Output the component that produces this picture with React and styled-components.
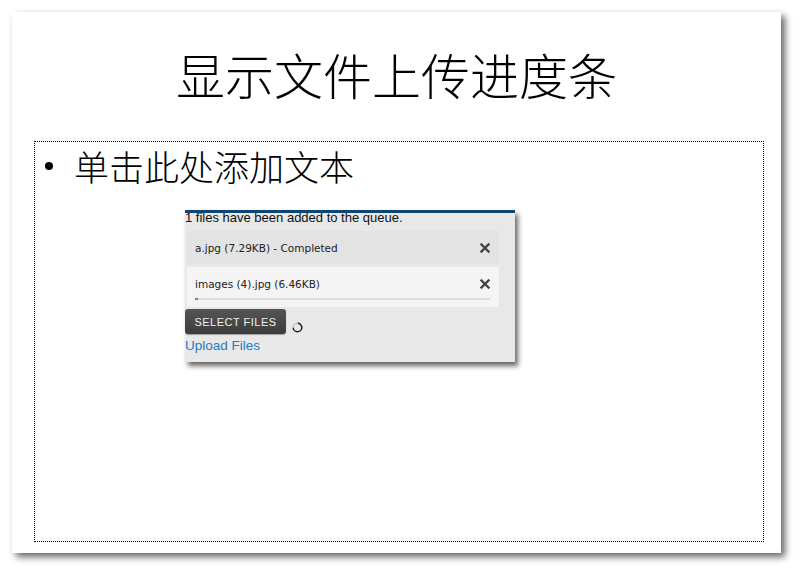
import React from 'react';
import styled, { createGlobalStyle } from 'styled-components';

const Global = createGlobalStyle`
    html, body {
        margin: 0;
        padding: 0;
        background: #ffffff;
    }
    * {
        box-sizing: border-box;
    }
`;

const files = [
    { name: 'a.jpg (7.29KB) - Completed', done: true },
    { name: 'images (4).jpg (6.46KB)', done: false, progress: 1 },
];

const CloseIcon = () => (
    <svg width="10" height="10" viewBox="0 0 10 10">
        <path d="M1.5 1.5 L8.5 8.5 M8.5 1.5 L1.5 8.5" stroke="#444" strokeWidth="2.4" strokeLinecap="square" />
    </svg>
);

const Spinner = () => (
    <svg width="11" height="11" viewBox="0 0 11 11">
        <path d="M5.5 1.2 A4.3 4.3 0 1 1 1.2 5.5" fill="none" stroke="#222" strokeWidth="1.5" />
        <path d="M1.2 5.5 A4.3 4.3 0 0 1 5.5 1.2" fill="none" stroke="#c8c8c8" strokeWidth="1.5" />
    </svg>
);

export default function App() {
    return (
        <>
            <Global />
            <Page>
                <Slide>
                    <Title>显示文件上传进度条</Title>
                    <ContentBox>
                        <Bullet>
                            <Dot />
                            <BulletText>单击此处添加文本</BulletText>
                        </Bullet>
                        <Shot>
                            <QueueText>1 files have been added to the queue.</QueueText>
                            <FileList>
                                {files.map(f => (
                                    <FileRow key={f.name} done={f.done}>
                                        <FileLine>
                                            <FileName>{f.name}</FileName>
                                            <CloseIcon />
                                        </FileLine>
                                        {!f.done && (
                                            <Track>
                                                <Fill style={{ width: `${f.progress}%` }} />
                                            </Track>
                                        )}
                                    </FileRow>
                                ))}
                            </FileList>
                            <ButtonRow>
                                <SelectButton>SELECT FILES</SelectButton>
                                <SpinWrap>
                                    <Spinner />
                                </SpinWrap>
                            </ButtonRow>
                            <UploadLink href="#">Upload Files</UploadLink>
                        </Shot>
                    </ContentBox>
                </Slide>
            </Page>
        </>
    );
}

const Page = styled.div`
    width: 801px;
    height: 573px;
    padding: 12px 0 0 12px;
    background: #ffffff;
`;

const Slide = styled.div`
    width: 769px;
    height: 541px;
    background: #ffffff;
    box-shadow: 4px 4px 7px rgba(0, 0, 0, 0.6);
    padding: 37px 0 0 22px;
    display: flex;
    flex-direction: column;
`;

const Title = styled.h1`
    margin: 0 22px 0 0;
    font-family: 'Noto Sans CJK SC', sans-serif;
    font-weight: 300;
    font-size: 49px;
    line-height: 49px;
    color: #000;
    text-align: center;
`;

const ContentBox = styled.div`
    margin-top: 43px;
    width: 730px;
    height: 401px;
    border: 1px dotted #000;
    padding: 6px 0 0 10px;
`;

const Bullet = styled.div`
    display: flex;
    align-items: center;
    height: 35px;
`;

const Dot = styled.span`
    width: 8px;
    height: 8px;
    border-radius: 50%;
    background: #000;
    margin-right: 21px;
`;

const BulletText = styled.span`
    font-family: 'Noto Sans CJK SC', sans-serif;
    font-weight: 300;
    font-size: 35px;
    line-height: 35px;
    color: #000;
`;

const Shot = styled.div`
    position: relative;
    margin: 27px 0 0 140px;
    width: 330px;
    height: 152px;
    background: #e8e8e8;
    box-shadow: 3px 4px 5px rgba(0, 0, 0, 0.6);
    padding-top: 3px;
    overflow: hidden;
    font-family: 'Liberation Sans', Arial, sans-serif;

    &::before {
        content: '';
        position: absolute;
        left: 0;
        top: 0;
        width: 100%;
        height: 3px;
        background: #0d4675;
        z-index: 1;
    }
`;

const QueueText = styled.div`
    font-size: 13px;
    line-height: 13px;
    margin-top: -2px;
    color: #111;
    white-space: nowrap;
`;

const FileList = styled.div`
    display: flex;
    flex-direction: column;
    gap: 3px;
    margin: 7px 0 2px 2px;
    width: 312px;
`;

const FileRow = styled.div`
    background: ${props => (props.done ? '#e3e3e3' : '#f4f4f4')};
    height: ${props => (props.done ? '33px' : '40px')};
    padding: ${props => (props.done ? '0 8px' : '9px 8px 0')};
    display: flex;
    flex-direction: column;
    justify-content: ${props => (props.done ? 'center' : 'flex-start')};
`;

const FileLine = styled.div`
    display: flex;
    align-items: center;
    justify-content: space-between;
    height: 15px;
    padding-right: 1px;
`;

const FileName = styled.span`
    font-family: 'DejaVu Sans', Verdana, sans-serif;
    font-size: 10.5px;
    color: #222;
`;

const Track = styled.div`
    margin-top: 7px;
    height: 2px;
    width: 295px;
    background: #dcdcdc;
`;

const Fill = styled.div`
    height: 100%;
    background: #3b8fd6;
`;

const ButtonRow = styled.div`
    display: flex;
    align-items: flex-end;
    height: 25px;
`;

const SelectButton = styled.button`
    width: 101px;
    height: 25px;
    border: none;
    border-radius: 3px;
    background: linear-gradient(#555555, #3c3c3c);
    color: #f0f0f0;
    font-family: 'Liberation Sans', Arial, sans-serif;
    font-size: 11px;
    letter-spacing: 0.5px;
    padding: 0;
    box-shadow: 0 1px 1px rgba(0, 0, 0, 0.3);
`;

const SpinWrap = styled.span`
    margin: 0 0 1px 6px;
    display: flex;
`;

const UploadLink = styled.a`
    display: block;
    margin-top: 4px;
    font-size: 13.5px;
    line-height: 16px;
    color: #1f7cc4;
    text-decoration: none;
`;
